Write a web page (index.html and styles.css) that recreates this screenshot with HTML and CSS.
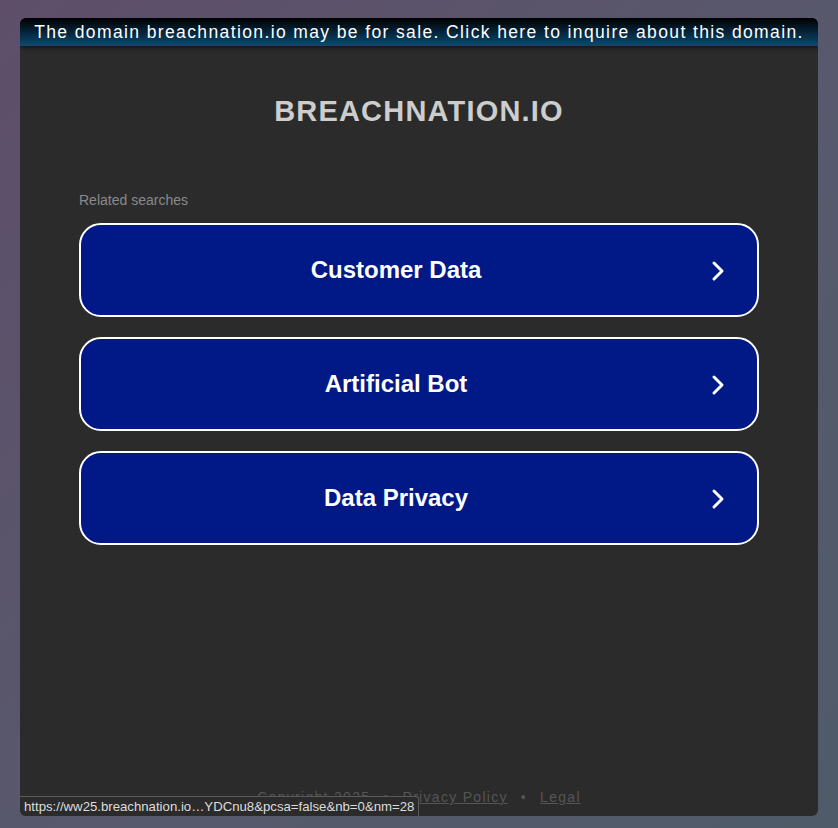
FILE: index.html
```html
<!DOCTYPE html>
<html lang="en">
<head>
<meta charset="utf-8">
<title>breachnation.io</title>
<link rel="stylesheet" href="styles.css">
</head>
<body>
<div class="frame">
  <a class="banner" href="#">The domain breachnation.io may be for sale. Click here to inquire about this domain.</a>
  <main class="content">
    <h1 class="title">BREACHNATION.IO</h1>
    <section class="related">
      <div class="related-label">Related searches</div>
      <div class="links">
        <a class="link" href="#"><span class="link-text">Customer Data</span><svg class="chev" width="14" height="22" viewBox="0 0 14 22"><path d="M3 3 L11 11 L3 19" fill="none" stroke="#fff" stroke-width="3" stroke-linecap="round" stroke-linejoin="round"/></svg></a>
        <a class="link" href="#"><span class="link-text">Artificial Bot</span><svg class="chev" width="14" height="22" viewBox="0 0 14 22"><path d="M3 3 L11 11 L3 19" fill="none" stroke="#fff" stroke-width="3" stroke-linecap="round" stroke-linejoin="round"/></svg></a>
        <a class="link" href="#"><span class="link-text">Data Privacy</span><svg class="chev" width="14" height="22" viewBox="0 0 14 22"><path d="M3 3 L11 11 L3 19" fill="none" stroke="#fff" stroke-width="3" stroke-linecap="round" stroke-linejoin="round"/></svg></a>
      </div>
    </section>
    <footer class="footer">
      <span>Copyright 2025</span><span class="dot">•</span><a href="#">Privacy Policy</a><span class="dot">•</span><a href="#">Legal</a>
    </footer>
  </main>
  <div class="status">https://ww25.breachnation.io…YDCnu8&amp;pcsa=false&amp;nb=0&amp;nm=28</div>
</div>
</body>
</html>
```
FILE: styles.css
```css
* { box-sizing: border-box; }
html, body { height: 100%; }
body {
  margin: 0;
  padding: 18px 20px 12px 20px;
  background: linear-gradient(135deg, #5e4e6a 0%, #575a6c 60%, #4f5b68 100%);
  font-family: "Liberation Sans", Arial, sans-serif;
}
.frame {
  position: relative;
  height: 798px;
  background: #2b2b2b;
  border-radius: 6px;
  overflow: hidden;
  display: flex;
  flex-direction: column;
}
.banner {
  display: block;
  height: 28px;
  line-height: 28px;
  text-align: center;
  color: #fff;
  text-decoration: none;
  font-size: 17.5px;
  letter-spacing: 1.38px;
  background: linear-gradient(to bottom, #000 0%, #05243a 50%, #0c4a6f 100%);
  box-shadow: 0 2px 4px rgba(0,0,0,0.5);
  position: relative;
  z-index: 1;
}
.content {
  flex: 1;
  display: flex;
  flex-direction: column;
  align-items: stretch;
  padding: 0 59px;
}
.title {
  margin: 48px 0 0 0;
  text-align: center;
  color: #cdcdcd;
  font-size: 29px;
  font-weight: bold;
  letter-spacing: 1.2px;
  line-height: 34px;
}
.related { margin-top: 64px; }
.related-label {
  color: #8a8a8a;
  font-size: 14px;
  line-height: 16px;
}
.links {
  margin-top: 15px;
  display: flex;
  flex-direction: column;
  gap: 20px;
}
.link {
  height: 94px;
  border: 2px solid #fff;
  border-radius: 22px;
  background: #011887;
  color: #fff;
  text-decoration: none;
  display: flex;
  align-items: center;
  justify-content: center;
  position: relative;
}
.link-text {
  font-size: 24px;
  font-weight: bold;
  margin-right: 46px;
}
.chev {
  position: absolute;
  right: 32px;
  top: 35px;
}
.footer {
  margin-top: auto;
  margin-bottom: 11px;
  text-align: center;
  color: #555;
  font-size: 14px;
  letter-spacing: 1.3px;
  line-height: 16px;
}
.footer a { color: #555; }
.dot { margin: 0 13px; }
.status {
  position: absolute;
  left: 0;
  bottom: 0;
  height: 20px;
  padding: 0 4px;
  line-height: 19px;
  font-size: 13.2px;
  color: #ddd;
  background: #2b2b2b;
  border-top: 1px solid #5a5a5a;
  border-right: 1px solid #5a5a5a;
  border-top-right-radius: 3px;
  z-index: 2;
}
```
